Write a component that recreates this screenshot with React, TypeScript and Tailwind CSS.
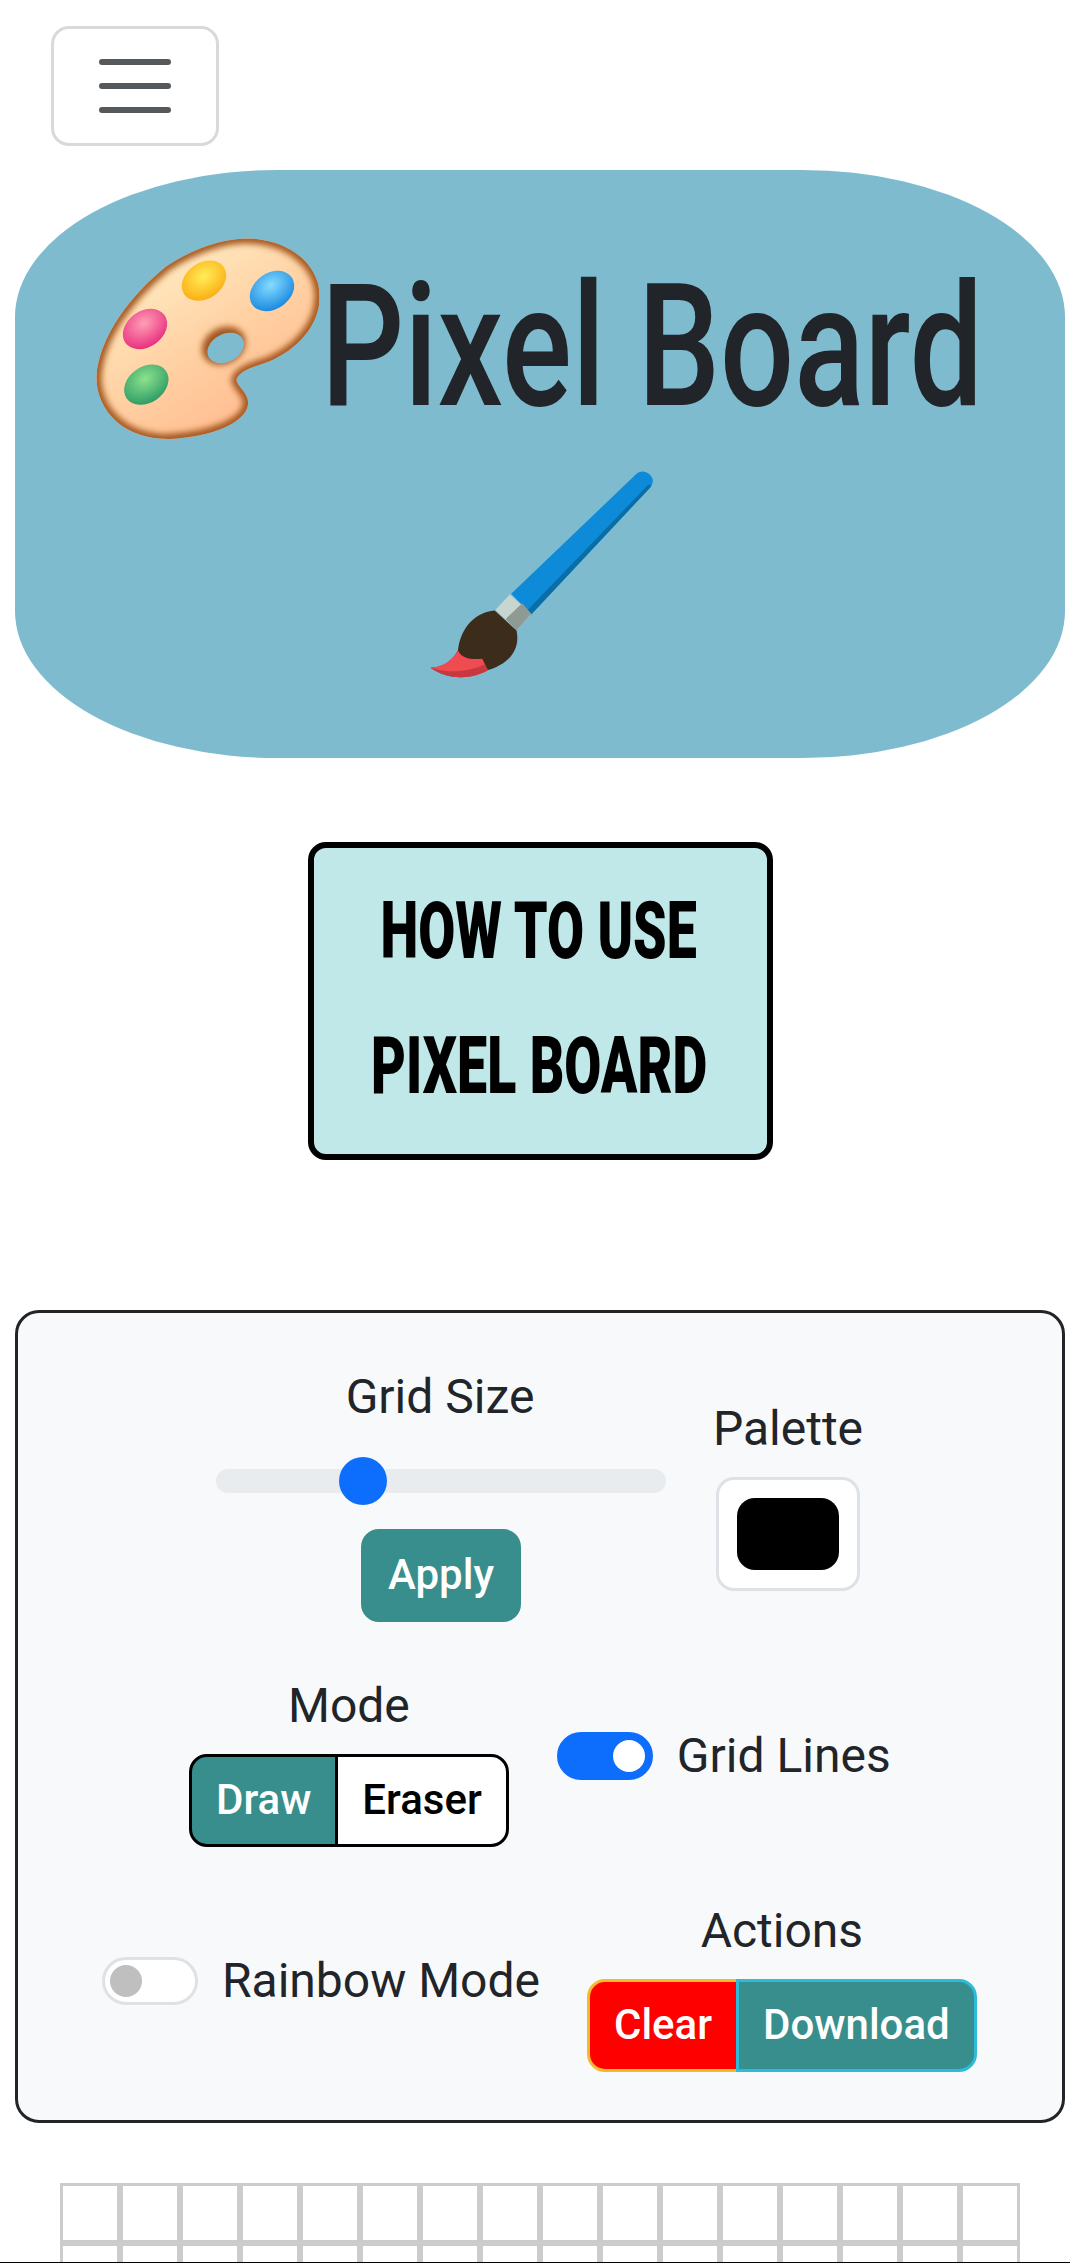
import React from 'react';

function PaletteEmoji() {
  const body =
    'M50 470 C60 350 150 230 260 140 C350 80 450 50 530 58 C640 70 720 140 720 230 C720 320 650 390 570 425 C530 440 480 450 470 480 C470 500 510 520 505 555 C495 610 400 650 270 658 C140 660 50 580 50 470 Z';
  return (
    <svg width="230" height="210" viewBox="40 40 690 630" className="shrink-0">
      <defs>
        <linearGradient id="skin" x1="0.15" y1="0.1" x2="0.75" y2="0.95">
          <stop offset="0" stopColor="#ffeec6" />
          <stop offset="0.5" stopColor="#ffd2a4" />
          <stop offset="1" stopColor="#ffb98e" />
        </linearGradient>
        <radialGradient id="yellow" cx="0.55" cy="0.4" r="0.65">
          <stop offset="0" stopColor="#ffee58" />
          <stop offset="1" stopColor="#fbaa10" />
        </radialGradient>
        <radialGradient id="blue" cx="0.55" cy="0.35" r="0.65">
          <stop offset="0" stopColor="#86dcff" />
          <stop offset="1" stopColor="#1a8ae0" />
        </radialGradient>
        <radialGradient id="pink" cx="0.55" cy="0.35" r="0.65">
          <stop offset="0" stopColor="#ff9fb6" />
          <stop offset="1" stopColor="#e8317f" />
        </radialGradient>
        <radialGradient id="green" cx="0.55" cy="0.35" r="0.65">
          <stop offset="0" stopColor="#8ce28c" />
          <stop offset="1" stopColor="#2f9c66" />
        </radialGradient>
        <clipPath id="bodyClip">
          <path d={body} />
        </clipPath>
        <filter id="soft" x="-10%" y="-10%" width="120%" height="120%">
          <feGaussianBlur stdDeviation="9" />
        </filter>
      </defs>
      <path d={body} fill="url(#skin)" />
      <g clipPath="url(#bodyClip)">
        <g filter="url(#soft)">
          <path d={body} fill="none" stroke="#a3541a" strokeWidth="30" />
          <ellipse cx="432" cy="378" rx="68" ry="54" transform="rotate(-28 432 378)" fill="#a3541a" />
        </g>
      </g>
      <ellipse cx="438" cy="385" rx="58" ry="42" transform="rotate(-28 438 385)" fill="#7fbbcf" />
      <ellipse cx="373" cy="183" rx="72" ry="54" transform="rotate(-35 373 183)" fill="url(#yellow)" />
      <ellipse cx="577" cy="214" rx="72" ry="54" transform="rotate(-35 577 214)" fill="url(#blue)" />
      <ellipse cx="196" cy="328" rx="72" ry="54" transform="rotate(-35 196 328)" fill="url(#pink)" />
      <ellipse cx="200" cy="495" rx="72" ry="54" transform="rotate(-35 200 495)" fill="url(#green)" />
    </svg>
  );
}

function BrushEmoji() {
  return (
    <svg width="233" height="217" viewBox="40 50 700 650" className="shrink-0">
      <path d="M302 430 L680 68 Q700 55 722 75 Q735 95 718 112 L362 492 Z" fill="#0d8bd9" />
      <path d="M350 480 L712 104 Q720 98 722 108 L362 492 Z" fill="#0a6ea6" />
      <path d="M255 478 L298 432 L362 490 L318 540 Z" fill="#c9d6d0" />
      <path d="M285 506 L335 458 L362 490 L318 540 Z" fill="#8f9a94" />
      <path
        d="M252 480 C195 485 150 530 142 600 C120 640 90 650 60 652 C100 680 160 695 230 660 C295 640 330 600 318 540 Z"
        fill="#3b2c1c"
      />
      <path
        d="M60 652 C95 650 125 630 142 600 C150 615 165 630 215 625 L232 660 C170 695 100 680 60 652 Z"
        fill="#ef4b50"
      />
      <path d="M60 652 C110 668 170 668 222 642 L232 660 C170 695 100 680 60 652 Z" fill="#c9383f" />
    </svg>
  );
}

function Switch({ on }: { on: boolean }) {
  if (on) {
    return (
      <span className="flex h-[48px] w-[96px] shrink-0 items-center justify-end rounded-full border-[3px] border-[#0d6efd] bg-[#0d6efd] pr-[5px]">
        <span className="h-[32px] w-[32px] rounded-full bg-white" />
      </span>
    );
  }
  return (
    <span className="flex h-[48px] w-[96px] shrink-0 items-center rounded-full border-[3px] border-[#dee2e6] bg-white pl-[5px]">
      <span className="h-[32px] w-[32px] rounded-full bg-[#bfbfbf]" />
    </span>
  );
}

export default function App() {
  const cells = Array.from({ length: 32 });

  return (
    <div className="flex h-[2263px] flex-col overflow-hidden border-b border-black bg-white font-['Roboto',sans-serif] text-[48px] leading-[72px] text-[#212529]">
      <button className="mt-[26px] ml-[51px] flex h-[120px] w-[168px] shrink-0 flex-col items-center justify-center gap-[18px] rounded-[18px] border-[3px] border-[#d9d9d9]">
        <span className="h-[6px] w-[72px] rounded-full bg-[#55595c]" />
        <span className="h-[6px] w-[72px] rounded-full bg-[#55595c]" />
        <span className="h-[6px] w-[72px] rounded-full bg-[#55595c]" />
      </button>

      <h1 className="mt-[24px] ml-[15px] flex h-[588px] w-[1050px] shrink-0 flex-col items-center rounded-[25%] bg-[#7fbbcf] pt-[63px]">
        <div className="flex h-[210px] w-full items-center pl-[78px]">
          <PaletteEmoji />
          <span className="mt-[17px] ml-[-2px] block w-[652px] origin-left scale-x-[0.768] whitespace-nowrap text-[170px] leading-[210px] font-medium">
            Pixel Board
          </span>
        </div>
        <div className="mt-[24px]">
          <BrushEmoji />
        </div>
      </h1>

      <button className="mt-[84px] ml-[308px] flex h-[318px] w-[465px] shrink-0 flex-col items-center rounded-[18px] border-[6px] border-black bg-[#c1e8e8] pt-[16px] pr-[3px] text-black">
        <span className="block scale-x-[0.68] whitespace-nowrap text-[79px] leading-[135px] font-black">HOW TO USE</span>
        <span className="block scale-x-[0.68] whitespace-nowrap text-[79px] leading-[135px] font-black">PIXEL BOARD</span>
      </button>

      <section className="mt-[150px] ml-[15px] flex h-[813px] w-[1050px] shrink-0 flex-col gap-[48px] rounded-[24px] border-[3px] border-[#212529] bg-[#f8f9fa] py-[48px]">
        <div className="flex items-center pl-[198px]">
          <div className="flex w-[450px] flex-col items-center">
            <div className="mr-[2px]">Grid Size</div>
            <div className="relative mt-[36px] h-[24px] w-[450px] rounded-full bg-[#e9ecef]">
              <span className="absolute top-[-12px] left-[123px] h-[48px] w-[48px] rounded-full bg-[#0d6efd]" />
            </div>
            <button className="mt-[36px] rounded-[18px] border-[3px] border-[#378e8c] bg-[#378e8c] px-[24px] pt-[11px] pb-[13px] text-[42px] leading-[63px] font-medium text-white">
              Apply
            </button>
          </div>
          <div className="ml-[50px] flex w-[144px] flex-col items-center">
            <div className="mb-[12px]">Palette</div>
            <div className="h-[114px] w-[144px] rounded-[18px] border-[3px] border-[#dee2e6] bg-white p-[18px]">
              <div className="h-full w-full rounded-[18px] bg-black" />
            </div>
          </div>
        </div>

        <div className="flex items-start pl-[171px]">
          <div className="flex flex-col items-center">
            <div className="mb-[12px]">Mode</div>
            <div className="flex">
              <button className="rounded-l-[18px] border-[3px] border-black bg-[#378e8c] px-[24px] pt-[11px] pb-[13px] text-[42px] leading-[63px] font-medium text-white">
                Draw
              </button>
              <button className="ml-[-3px] rounded-r-[18px] border-[3px] border-black bg-white px-[24px] pt-[11px] pb-[13px] text-[42px] leading-[63px] font-medium text-black">
                Eraser
              </button>
            </div>
          </div>
          <div className="mt-[49px] ml-[48px] flex items-center gap-[24px]">
            <Switch on />
            <span className="mt-[1px]">Grid Lines</span>
          </div>
        </div>

        <div className="flex items-start pl-[84px]">
          <div className="mt-[50px] flex items-center gap-[24px]">
            <Switch on={false} />
            <span>Rainbow Mode</span>
          </div>
          <div className="ml-[47px] flex flex-col items-center">
            <div className="mb-[12px]">Actions</div>
            <div className="flex">
              <button className="rounded-l-[18px] border-[3px] border-[#f5b92f] bg-[#ff0000] px-[24px] pt-[11px] pb-[13px] text-[42px] leading-[63px] font-medium text-white">
                Clear
              </button>
              <button className="relative ml-[-3px] rounded-r-[18px] border-[3px] border-[#2dbcd8] bg-[#378e8c] px-[24px] pt-[11px] pb-[13px] text-[42px] leading-[63px] font-medium text-white">
                Download
              </button>
            </div>
          </div>
        </div>
      </section>

      <div className="mt-[60px] ml-[60px] grid shrink-0 grid-cols-[repeat(16,60px)]">
        {cells.map((_, i) => (
          <div key={i} className="h-[60px] w-[60px] border-[3px] border-[#cccccc]" />
        ))}
      </div>
    </div>
  );
}
